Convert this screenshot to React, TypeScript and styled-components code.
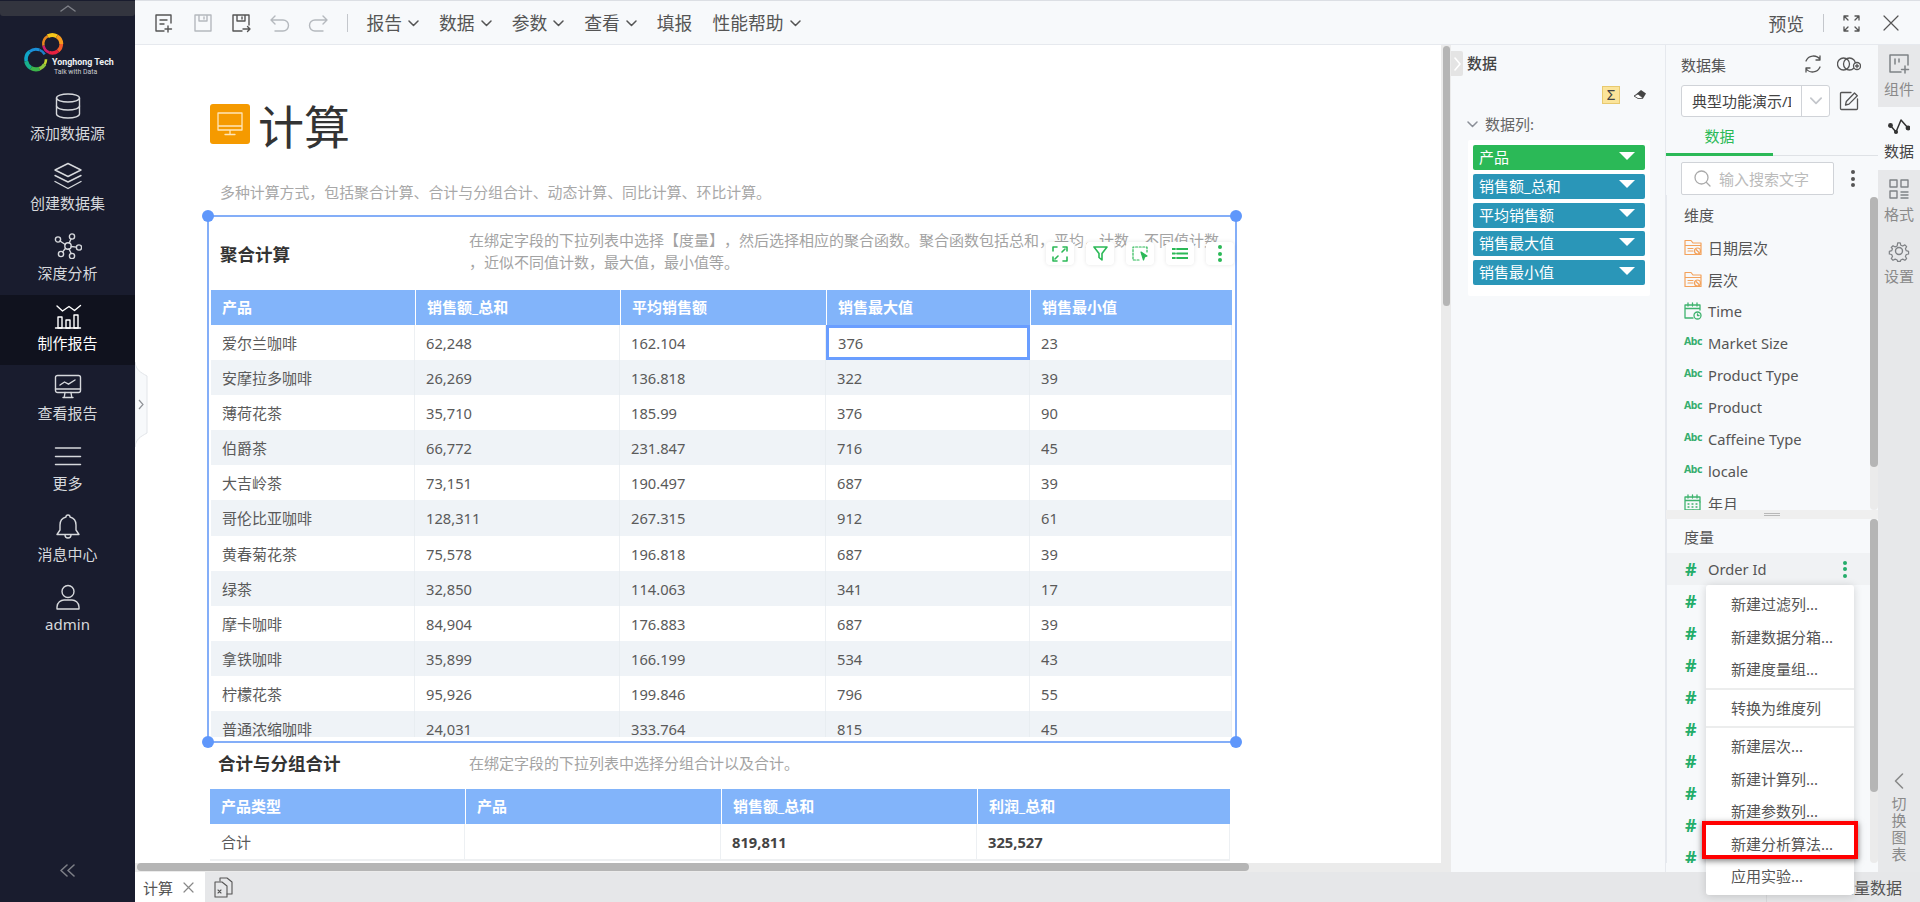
import React from 'react';
import styled, { createGlobalStyle } from 'styled-components';

const Global = createGlobalStyle`
  html, body { margin: 0; padding: 0; height: 100%; overflow: hidden; background: #fff; }
  body { font-family: "Noto Sans", "Noto Sans CJK SC", sans-serif; font-size: 15px; color: #555; text-spacing-trim: space-all; }
  #root { height: 100%; }
  * { box-sizing: border-box; }
`;

const Page = styled.div`position: relative; display: flex; width: 100%; height: 100vh; overflow: hidden;`;

/* ---------- sidebar ---------- */
const Sidebar = styled.aside`display: flex; flex-direction: column; flex: 0 0 135px; background: #191c2e; color: #d6d8dc;`;
const TopStrip = styled.div`display: flex; justify-content: center; align-items: center; height: 15px; margin-top: 1px; background: #33353f; border-radius: 0 0 3px 3px;`;
const LogoBox = styled.div`height: 69px; padding: 16px 0 0 22px;`;
const NavItem = styled.div<{ $active?: boolean }>`
  display: flex; flex-direction: column; align-items: center; height: 70.1px; padding-top: 7px;
  background: ${p => (p.$active ? '#10121e' : 'transparent')};
  color: ${p => (p.$active ? '#fff' : '#d6d8dc')};
  svg { display: block; }
`;
const NavIconBox = styled.div`height: 28px; display: flex; align-items: center; justify-content: center;`;
const NavLabel = styled.div`font-size: 15px; line-height: 20px; margin-top: 3px;`;
const Collapse = styled.div`margin-top: auto; padding-bottom: 25px; display: flex; justify-content: center;`;
const SideTab = styled.div`position: absolute; left: 135px; top: 362px; width: 13px; height: 85px;`;

/* ---------- main ---------- */
const Main = styled.main`flex: 1; display: flex; flex-direction: column; min-width: 0;`;
const Toolbar = styled.header`
  display: flex; align-items: center; height: 45px; padding: 1px 21px 0 19px;
  background: #f7f9fb; border-top: 1px solid #dcdfe4; border-bottom: 1px solid #e6e9ee;
  font-size: 17.8px; color: #555;
`;
const ToolIcon = styled.div`width: 20px; height: 20px; margin-right: 18.5px; display: flex; align-items: center; justify-content: center;`;
const ToolSep = styled.div`width: 1px; height: 18px; background: #c4c7cc; margin: 0 19px 0 0;`;
const ToolMenu = styled.div`display: flex; align-items: center; gap: 6px; margin-right: 20px; line-height: 24px; white-space: nowrap;`;
const ToolRight = styled.div`margin-left: auto; display: flex; align-items: center;`;
const Work = styled.div`flex: 1; display: flex; min-height: 0;`;
const CanvasColumn = styled.div`flex: 0 0 1316px; display: flex; flex-direction: column; min-height: 0;`;
const CanvasRow = styled.div`flex: 1; display: flex; min-height: 0;`;
const CanvasBody = styled.div`flex: 1; overflow: hidden; padding: 59px 0 0 72px; background: #fff;`;
const VTrack = styled.div`flex: 0 0 10px; background: #ebebeb; padding: 1px 1px 0 2px;`;
const VThumb = styled.div`height: 260px; background: #b5b5b5; border-radius: 4px;`;
const HTrack = styled.div`flex: 0 0 9px; background: #ebebeb; padding-left: 2px;`;
const HThumb = styled.div`width: 1112px; height: 8px; background: #b5b5b5; border-radius: 4px;`;

const PageHead = styled.div`display: flex; align-items: center; height: 40px; margin-left: 3px; gap: 8px;`;
const OrangeBadge = styled.div`width: 40px; height: 40px; background: #f59a00; border-radius: 3px; display: flex; align-items: center; justify-content: center;`;
const PageTitle = styled.h1`margin: 3px 0 0; font-size: 46px; line-height: 50px; font-weight: 400; color: #333;`;
const PageSub = styled.p`margin: 0; padding: 37px 0 0 13px; height: 71px; font-size: 14.9px; line-height: 22px; color: #a8a8a8; white-space: nowrap;`;

const SelectBox = styled.section`position: relative; width: 1030px; height: 528px; border: 2px solid #84aef8; padding: 0 0 3px 2px; `;
const Handle = styled.span<{ $x: 'l' | 'r'; $y: 't' | 'b' }>`
  position: absolute; width: 12px; height: 12px; border-radius: 50%; background: #5f97fb;
  ${p => (p.$x === 'l' ? 'left: -7px;' : 'right: -7px;')}
  ${p => (p.$y === 't' ? 'top: -7px;' : 'bottom: -7px;')}
`;
const SectionHead = styled.div<{ $h: number; $left: number }>`display: flex; align-items: center; height: ${p => p.$h}px; margin-left: ${p => p.$left}px;`;
const SectionTitle = styled.h2<{ $w: number; $dy: number }>`flex: 0 0 ${p => p.$w}px; margin: ${p => p.$dy}px 0 0; font-size: 17.5px; line-height: 24px; font-weight: 700; color: #333;`;
const SectionDesc = styled.div<{ $dy: number }>`font-size: 15px; line-height: 22px; color: #a3a3a3; white-space: nowrap; margin-top: ${p => p.$dy}px;`;
const Clip = styled.div`height: 447px; overflow: hidden;`;
const FloatBar = styled.div`position: absolute; right: 1px; top: 25px; display: flex; gap: 12px;`;
const FloatBtn = styled.div`width: 28px; height: 23px; background: #fff; border-radius: 4px; box-shadow: 0 0 4px rgba(0,0,0,.1); display: flex; align-items: center; justify-content: center;`;

const Grid = styled.div<{ $cols: string }>`display: grid; grid-template-columns: ${p => p.$cols};`;
const HeadCell = styled.div<{ $h: number }>`
  height: ${p => p.$h}px; line-height: ${p => p.$h}px; padding-left: 11px; background: #82b4fa; color: #fff;
  font-weight: 700; font-size: 15px; border-left: 1px solid #fff; white-space: nowrap;
  &:first-child { border-left: 0; }
`;
const Cell = styled.div<{ $alt?: boolean; $sel?: boolean; $strong?: boolean; $cjk?: boolean }>`
  height: 35.1px; line-height: 36px; padding-left: ${p => (p.$sel ? '9px' : '11px')};
  background: ${p => (p.$alt ? '#eff3f7' : '#fff')}; color: ${p => (p.$strong ? '#444' : '#5a5a5a')};
  font-weight: ${p => (p.$strong ? 700 : 400)}; white-space: nowrap; font-size: ${p => (p.$cjk ? '15px' : '14.7px')};
  border-right: ${p => (p.$sel ? '0' : '1px solid rgba(230,233,238,.7)')};
  ${p => p.$sel && 'border: 3px solid #6a9eff; line-height: 30px;'}
`;
const SecondBlock = styled.div`margin-left: 3px; width: 1020px;`;
const TotalRow = styled.div`border-bottom: 2px solid #eef0f2; height: 37px; overflow: hidden;`;

/* ---------- data binding panel ---------- */
const DataPanel = styled.div`flex: 0 0 215px; background: #f7f9fb; border-right: 1px solid #e6e9ee; padding-top: 6px;`;
const PanelHeadRow = styled.div`display: flex; align-items: center; gap: 4px; height: 25px;`;
const CollapseTab = styled.div`width: 12px; height: 25px; background: #e4e4e4; display: flex; align-items: center; justify-content: center; border-radius: 0 2px 2px 0;`;
const PanelTitle = styled.span`font-size: 15px; color: #444; font-weight: 500; margin-top: -2px;`;
const ToolRow = styled.div`display: flex; justify-content: flex-end; align-items: center; gap: 13px; margin-top: 10px; padding-right: 18px; height: 18px;`;
const SumBtn = styled.div`width: 18px; height: 18px; background: #fbe49a; border: 1px solid #e8c96f; color: #444; font-size: 15px; line-height: 15px; text-align: center;`;
const GroupHead = styled.div`display: flex; align-items: center; gap: 7px; height: 20px; margin-top: 10px; padding-left: 16px; color: #666; font-size: 15px; line-height: 16px;`;
const PillBox = styled.div`display: flex; flex-direction: column; gap: 3.75px; width: 182px; height: 156px; margin: 6px 0 0 17px; padding: 5px; background: #fff; border-radius: 2px;`;
const Pill = styled.div<{ $green?: boolean }>`
  display: flex; align-items: center; justify-content: space-between; height: 25px; padding: 0 10px 0 6px;
  background: ${p => (p.$green ? '#2bb957' : '#2a96b8')}; color: #fff; border-radius: 2px; font-size: 15px; line-height: 25px;
`;
const Tri = styled.span`width: 0; height: 0; border-left: 8px solid transparent; border-right: 8px solid transparent; border-top: 8px solid #fff; margin-top: -4px;`;

/* ---------- field panel ---------- */
const FieldPanel = styled.div`flex: 0 0 212px; display: flex; flex-direction: column; background: #f7f9fb; min-height: 0;`;
const DsHead = styled.div`display: flex; align-items: center; height: 24px; margin-top: 7px; padding: 0 17px 0 15px; font-size: 15px; color: #555;`;
const DsName = styled.span`margin-right: auto;`;
const DsIcons = styled.div`display: flex; align-items: center; gap: 15px;`;
const SelectRow = styled.div`display: flex; align-items: center; gap: 9px; margin-top: 9px; padding-left: 15px;`;
const SelectField = styled.div`display: flex; width: 149px; height: 32px; background: #fff; border: 1px solid #d0d3d8; border-radius: 3px;`;
const SelectCell = styled.div`width: 120px; padding: 0 10px; border-right: 1px solid #d0d3d8;`;
const SelectText = styled.div`overflow: hidden; white-space: nowrap; line-height: 30px; color: #444; font-size: 15px;`;
const SelectArrow = styled.div`flex: 1; display: flex; align-items: center; justify-content: center;`;
const TabLine = styled.div`height: 39px; border-bottom: 1px solid #dfe2e6;`;
const TabItem = styled.div`width: 107px; height: 39px; border-bottom: 3px solid #2bb957; color: #2bb957; text-align: center; font-size: 15px; line-height: 38px;`;
const SearchRow = styled.div`display: flex; align-items: center; height: 33px; margin-top: 6px; padding-left: 15px;`;
const SearchBox = styled.div`display: flex; align-items: center; gap: 8px; width: 153px; height: 33px; padding-left: 12px; background: #fff; border: 1px solid #d0d3d8; border-radius: 2px; color: #bbb; font-size: 15px; white-space: nowrap;`;
const Dots = styled.div<{ $c?: string; $left?: number }>`
  display: flex; flex-direction: column; gap: 2.5px; align-items: center; margin-left: ${p => p.$left ?? 17}px;
  span { width: 4px; height: 4px; border-radius: 50%; background: ${p => p.$c || '#555'}; }
`;
const Pane = styled.div<{ $h: number; $top?: number }>`display: flex; height: ${p => p.$h}px; padding-top: ${p => p.$top ?? 0}px; border-left: 1px solid #e6e9ee; overflow: hidden;`;
const FieldList = styled.div`flex: 1; overflow: hidden; min-width: 0;`;
const PaneTrack = styled.div`flex: 0 0 8px; background: #ebebeb; border-radius: 4px;`;
const PaneThumb = styled.div<{ $h: number }>`height: ${p => p.$h}px; background: #b5b5b5; border-radius: 4px;`;
const PaneLabel = styled.div<{ $h: number }>`height: ${p => p.$h}px; padding: 2px 0 0 17px; line-height: ${p => p.$h - 2}px; color: #555; font-size: 15px;`;
const FieldRow = styled.div<{ $hover?: boolean; $cjk?: boolean }>`
  display: flex; align-items: center; height: 32.05px; padding-left: 17px; color: #555; font-size: ${p => (p.$cjk ? '15px' : '14.7px')}; white-space: nowrap;
  background: ${p => (p.$hover ? '#f0f2f4' : 'transparent')};
`;
const FieldIcon = styled.span`flex: 0 0 24px; display: flex; align-items: center;`;
const AbcMark = styled.span`font-size: 10.5px; font-weight: 700; color: #36ae6e; letter-spacing: -0.4px; margin-top: -4px;`;
const HashMark = styled.span`font-size: 18px; font-weight: 700; color: #24ad6a; line-height: 18px; margin-left: 1px;`;
const RowDots = styled.div`margin-left: auto; margin-right: 23px;`;
const Splitter = styled.div`height: 9px; background: #efefef; display: flex; flex-direction: column; align-items: center; justify-content: center; gap: 1px; span { width: 16px; height: 1px; background: #b8b8b8; }`;

/* ---------- right strip ---------- */
const Strip = styled.div`flex: 0 0 42px; display: flex; flex-direction: column; background: #e7e8ea;`;
const StripTab = styled.div<{ $active?: boolean; $h: number }>`
  display: flex; flex-direction: column; align-items: center; height: ${p => p.$h}px; padding-top: 8px;
  background: ${p => (p.$active ? '#f7f9fb' : 'transparent')}; color: ${p => (p.$active ? '#444' : '#8a8a8a')};
`;
const StripLabel = styled.span`font-size: 15px; line-height: 20px; margin-top: 4px;`;
const SwitchBox = styled.div`margin-top: auto; margin-bottom: 9px; display: flex; flex-direction: column; align-items: center; color: #8a8a8a; font-size: 15px; line-height: 17px;`;
const SwitchGap = styled.span`height: 5px;`;

/* ---------- bottom ---------- */
const Bottom = styled.footer`display: flex; align-items: center; flex: 0 0 30px; background: #e6e7e9; position: relative;`;
const SheetTab = styled.div`display: flex; align-items: center; justify-content: space-between; width: 70px; height: 30px; padding: 0 11px 0 8px; margin-right: 9px; background: #fff; color: #555; font-size: 15px;`;
const BottomDivider = styled.div`margin-left: auto; width: 1px; height: 30px; background: #d8d9db;`;
const BottomText = styled.div`flex: 0 0 153px; padding-left: 71px; font-size: 16px; color: #555; white-space: nowrap;`;

/* ---------- context menu ---------- */
const Menu = styled.div`position: absolute; left: 1706px; top: 585px; width: 148px; height: 310px; padding-top: 3px; background: #fff; border-radius: 3px; box-shadow: 0 1px 8px rgba(0,0,0,.16);`;
const MenuItem = styled.div<{ $mark?: boolean }>`
  position: relative; height: 32.5px; line-height: 32.5px; padding-left: 25px; font-size: 15px; color: #555; white-space: nowrap;
  ${p => p.$mark && `&::after { content: ''; position: absolute; left: -4px; right: -4px; top: -7px; bottom: 1px; border: 4px solid #f00; box-shadow: 0 2px 6px rgba(0,0,0,.5); }`}
`;
const MenuSep = styled.div`height: 2px; margin: 2px 0 2px; background: #eceded;`;
const Flip = styled.span<{ $flip?: boolean }>`display: flex; transform: ${p => (p.$flip ? 'scaleX(-1)' : 'none')};`;
const RightGap = styled.span<{ $w: number }>`width: ${p => p.$w}px;`;

/* ---------- icons ---------- */
type IP = { c?: string };
const Svg = ({ w, h, c = 'currentColor', sw = 1.4, vb, children }: { w: number; h: number; c?: string; sw?: number; vb?: string; children: React.ReactNode }) => (
  <svg width={w} height={h} viewBox={vb || `0 0 ${w} ${h}`} fill="none" stroke={c} strokeWidth={sw} strokeLinecap="round" strokeLinejoin="round">{children}</svg>
);
const Chevron = ({ c = '#555', s = 11 }: IP & { s?: number }) => (
  <Svg w={s} h={Math.round(s * 0.6)} c={c} sw={1.5} vb="0 0 11 7"><path d="M1 1l4.5 4.5L10 1" /></Svg>
);
const X = ({ s = 14, c = '#555' }: IP & { s?: number }) => (
  <Svg w={s} h={s} c={c} sw={1.2}><path d={`M1 1L${s - 1} ${s - 1}M${s - 1} 1L1 ${s - 1}`} /></Svg>
);
const arc = (cx: number, cy: number, r: number, a0: number, a1: number) => {
  const t = (a: number) => [cx + r * Math.cos((a * Math.PI) / 180), cy + r * Math.sin((a * Math.PI) / 180)].map(v => v.toFixed(2)).join(' ');
  return `M${t(a0)}A${r} ${r} 0 0 1 ${t(a1)}`;
};
const leftRing: [number, number, string, number][] = [
  [-70, -30, '#1c7fc8', 2.6], [-130, -70, '#1a8fd8', 3], [-190, -130, '#10a5c8', 3.6], [-240, -190, '#18b08c', 4],
  [-290, -240, '#3cb54a', 4.2], [-330, -290, '#8cc63f', 3.6], [-360, -330, '#c4d62e', 2.6],
];
const upperRing: [number, number, string, number][] = [
  [-120, -60, '#f5c61a', 4], [-60, 0, '#f79a1e', 4], [0, 50, '#f15a29', 3.6], [50, 110, '#e8213f', 3.4],
  [110, 170, '#d01c6a', 2.6], [170, 240, '#e8861e', 2.6],
];
const Logo = () => (
  <svg width="100" height="45" viewBox="0 0 100 45" fill="none">
    {leftRing.map(([a, b, c, w]) => <path key={a} d={arc(14, 27.3, 10, a, b)} stroke={c} strokeWidth={w} />)}
    {upperRing.map(([a, b, c, w]) => <path key={a} d={arc(30.3, 12, 9, a, b)} stroke={c} strokeWidth={w} />)}
    <text x="30" y="33" fill="#eef0f2" fontSize="8.9" fontWeight="700" fontFamily="Roboto, sans-serif">Yonghong Tech</text>
    <text x="32" y="42" fill="#c9ccd0" fontSize="6.9" fontFamily="Roboto, sans-serif">Talk with Data</text>
  </svg>
);
const navIcons: Record<string, React.ReactNode> = {
  db: <Svg w={26} h={26}><ellipse cx="13" cy="5" rx="11.5" ry="4" /><path d="M1.5 5v16c0 2.2 5 4 11.5 4s11.5-1.8 11.5-4V5" /><path d="M1.5 13c0 2.2 5 4 11.5 4s11.5-1.8 11.5-4" /></Svg>,
  layers: <Svg w={28} h={28}><path d="M14 1.5L27 8l-13 6.5L1 8z" /><path d="M1 13.5l13 6.5 13-6.5" /><path d="M1 19.5l13 7 13-7" /></Svg>,
  graph: <Svg w={28} h={26}><circle cx="14" cy="13" r="3.2" /><circle cx="18" cy="3.5" r="2.6" /><circle cx="4" cy="6.5" r="2.6" /><circle cx="25" cy="14.5" r="2.6" /><circle cx="7" cy="21" r="2.6" /><circle cx="18" cy="23" r="2.6" /><path d="M15.2 10l1.8-4M6 8l5.2 3.5M17.2 13.5l5.2.6M11.6 15.3l-3 3.6M15 16l2.2 4.5" /></Svg>,
  chart: <Svg w={28} h={26}><path d="M3 3l5.5 5 6.5-4.5 5.5 4 6-5" /><path d="M1.5 25h25" /><rect x="4" y="14" width="4" height="11" /><rect x="12" y="17" width="4" height="8" /><rect x="20" y="12" width="4" height="13" /></Svg>,
  monitor: <Svg w={28} h={25}><rect x="1.5" y="1.5" width="25" height="17" rx="2" /><path d="M1.5 15h25M6 11l4.5-3 4 2.2L21 6M9 23.5h10M11 18.5l-.8 5M17 18.5l.8 5" /></Svg>,
  bars: <Svg w={28} h={20} sw={1.5}><path d="M1.5 2h25M1.5 10.5h25M1.5 18.5h25" /></Svg>,
  bell: <Svg w={26} h={27}><path d="M13 2a2 2 0 0 1 2 2c4 1 6 4.500 6 8v5l3 4.500H2L5 17v-5c0-3.500 2-7 6-8a2 2 0 0 1 2-2z" /><path d="M10 22a3 3 0 0 0 6 0" /></Svg>,
  user: <Svg w={26} h={26}><circle cx="13" cy="7.500" r="6" /><path d="M2 25v-2c0-4.500 4-7 7-7h8c3 0 7 2.500 7 7v2z" /></Svg>,
};
const NewDoc = () => <Svg w={20} h={20} c="#555"><path d="M17 10V2H2v16h8M6 7h7M6 11h4M14 13v6M11 16h6.500" /></Svg>;
const SaveIcon = ({ c }: { c: string }) => <Svg w={20} h={20} c={c}><path d="M2 2h16v16H2zM6 2v6h8V2M11 4v2" /></Svg>;
const SaveAs = () => <Svg w={20} h={20} c="#555"><path d="M11 18H2V2h16v10M6 2v6h8V2M11 4v2M12 16h7M16.500 13.500L19 16l-2.500 2.500" /></Svg>;
const Undo = ({ flip }: { flip?: boolean }) => <Flip $flip={flip}><Svg w={20} h={18} c="#b5b9be"><path d="M5 2L1 6l4 4M1 6h12a5.500 5.500 0 0 1 0 11H5" /></Svg></Flip>;

const rows = [
  ['爱尔兰咖啡', '62,248', '162.104', '376', '23'], ['安摩拉多咖啡', '26,269', '136.818', '322', '39'],
  ['薄荷花茶', '35,710', '185.99', '376', '90'], ['伯爵茶', '66,772', '231.847', '716', '45'],
  ['大吉岭茶', '73,151', '190.497', '687', '39'], ['哥伦比亚咖啡', '128,311', '267.315', '912', '61'],
  ['黄春菊花茶', '75,578', '196.818', '687', '39'], ['绿茶', '32,850', '114.063', '341', '17'],
  ['摩卡咖啡', '84,904', '176.883', '687', '39'], ['拿铁咖啡', '35,899', '166.199', '534', '43'],
  ['柠檬花茶', '95,926', '199.846', '796', '55'], ['普通浓缩咖啡', '24,031', '333.764', '815', '45'],
];
const nav = [['db', '添加数据源'], ['layers', '创建数据集'], ['graph', '深度分析'], ['chart', '制作报告'], ['monitor', '查看报告'], ['bars', '更多'], ['bell', '消息中心'], ['user', 'admin']];
const Folder = () => <Svg w={18} h={17} c="#f3a25c" sw={1.2}><path d="M1 15.500V1.500h6l2 2.500h8v11.500zM1 6.500h16M4 9.500h5M4 12h5" /><circle cx="13.500" cy="12" r="3" fill="#f7f9fb" /><path d="M12 10.500l3 3" /></Svg>;
const Calendar = ({ clock }: { clock?: boolean }) => (
  <Svg w={18} h={18} c="#3fb36f" sw={1.3}>
    <path d="M1 3h15v5M1 3v13h8M1 6.500h15M4 1v3M8.500 1v3M13 1v3" />
    {clock ? <><circle cx="13.500" cy="13.500" r="3.500" /><path d="M13.500 12v1.500h1.500" /></> : <path d="M16 8v8H9M4 10h1M8 10h1M12 10h1M4 13h1M8 13h1M12 13h1" />}
  </Svg>
);
const dims: [React.ReactNode, string, boolean][] = [
  [<Folder />, '日期层次', true], [<Folder />, '层次', true], [<Calendar clock />, 'Time', false],
  [<AbcMark>Abc</AbcMark>, 'Market Size', false], [<AbcMark>Abc</AbcMark>, 'Product Type', false], [<AbcMark>Abc</AbcMark>, 'Product', false],
  [<AbcMark>Abc</AbcMark>, 'Caffeine Type', false], [<AbcMark>Abc</AbcMark>, 'locale', false], [<Calendar />, '年月', true],
];
const G = '#2bb957';
const floats = [
  <Svg w={16} h={16} c={G} sw={1.6}><path d="M1 5V1h4M11 1h4v4M1 11v4h4M15 11v4h-4M6 10l-3 3M10 6l3-3" /></Svg>,
  <Svg w={15} h={15} c={G} sw={1.6}><path d="M1 1h13L9 7.500V14L6 11.500V7.500z" /></Svg>,
  <Svg w={16} h={15} c={G} sw={1.2}><path d="M7 14H1V1h14v6" strokeDasharray="2 1.600" /><path d="M9 6l6 4-2.500 1-1 3z" fill={G} /></Svg>,
  <Svg w={16} h={13} c={G} sw={1.8}><path d="M0 2h3M5 2h11M0 6.500h3M5 6.500h11M0 11h3M5 11h11" /></Svg>,
  <Dots $c={G} $left={0}><span /><span /><span /></Dots>,
];

export default function App() {
  return (
    <Page>
      <Global />
      <Sidebar>
        <TopStrip><Svg w={16} h={7} c="#7d7f87" sw={1.5}><path d="M1 6l7-5 7 5" /></Svg></TopStrip>
        <LogoBox><Logo /></LogoBox>
        {nav.map(([k, l]) => (
          <NavItem key={l} $active={l === '制作报告'}>
            <NavIconBox>{navIcons[k]}</NavIconBox>
            <NavLabel>{l}</NavLabel>
          </NavItem>
        ))}
        <Collapse><Svg w={15} h={13} c="#7d7f87" sw={1.6}><path d="M7 1L1 6.500 7 12M14 1L8 6.500 14 12" /></Svg></Collapse>
      </Sidebar>
      <SideTab>
        <svg width="13" height="85" viewBox="0 0 13 85" fill="#f7f9fb" stroke="#e2e5e9">
          <path d="M0 0c1 8 5 10 12 14v57c-7 4-11 6-12 14z" />
          <path d="M4 38l4 4.500-4 4.500" stroke="#8f9297" fill="none" strokeWidth="1.2" />
        </svg>
      </SideTab>
      <Main>
        <Toolbar>
          <ToolIcon><NewDoc /></ToolIcon>
          <ToolIcon><SaveIcon c="#b5b9be" /></ToolIcon>
          <ToolIcon><SaveAs /></ToolIcon>
          <ToolIcon><Undo /></ToolIcon>
          <ToolIcon><Undo flip /></ToolIcon>
          <ToolSep />
          {['报告', '数据', '参数', '查看'].map(t => <ToolMenu key={t}>{t}<Chevron /></ToolMenu>)}
          <ToolMenu>填报</ToolMenu>
          <ToolMenu>性能帮助<Chevron /></ToolMenu>
          <ToolRight>
            <span>预览</span>
            <RightGap $w={19} />
            <ToolSep />
            <Svg w={17} h={17} c="#555" sw={1.3}><path d="M1 5V1h4M12 1h4v4M1 12v4h4M16 12v4h-4M1 1l4 4M16 1l-4 4M1 16l4-4M16 16l-4-4" /></Svg>
            <RightGap $w={23} />
            <X s={16} />
          </ToolRight>
        </Toolbar>
        <Work>
          <CanvasColumn>
            <CanvasRow>
              <CanvasBody>
                <PageHead>
                  <OrangeBadge><Svg w={26} h={24} c="#ffe6b8" sw={1.3}><path d="M1 1h24v17H1zM1 14h24M13 18v4M8 22.500h10" /></Svg></OrangeBadge>
                  <PageTitle>计算</PageTitle>
                </PageHead>
                <PageSub>多种计算方式，包括聚合计算、合计与分组合计、动态计算、同比计算、环比计算。</PageSub>
                <SelectBox>
                  <Handle $x="l" $y="t" /><Handle $x="r" $y="t" /><Handle $x="l" $y="b" /><Handle $x="r" $y="b" />
                  <SectionHead $h={73} $left={9}>
                    <SectionTitle $w={249} $dy={0}>聚合计算</SectionTitle>
                    <SectionDesc $dy={-5}>在绑定字段的下拉列表中选择【度量】，然后选择相应的聚合函数。聚合函数包括总和，平均，计数，不同值计数<br />，近似不同值计数，最大值，最小值等。</SectionDesc>
                  </SectionHead>
                  <FloatBar>{floats.map((f, i) => <FloatBtn key={i}>{f}</FloatBtn>)}</FloatBar>
                  <Clip>
                    <Grid $cols="204px 205px 206px 204px 202px">
                      {['产品', '销售额_总和', '平均销售额', '销售最大值', '销售最小值'].map(h => <HeadCell key={h} $h={35}>{h}</HeadCell>)}
                      {rows.map((r, i) => r.map((v, j) => <Cell key={`${i}-${j}`} $cjk={j === 0} $alt={i % 2 === 1} $sel={i === 0 && j === 3}>{v}</Cell>))}
                    </Grid>
                  </Clip>
                </SelectBox>
                <SecondBlock>
                  <SectionHead $h={46} $left={8}>
                    <SectionTitle $w={251} $dy={-7}>合计与分组合计</SectionTitle>
                    <SectionDesc $dy={-7}>在绑定字段的下拉列表中选择分组合计以及合计。</SectionDesc>
                  </SectionHead>
                  <Grid $cols="255px 256px 256px 253px">
                    {['产品类型', '产品', '销售额_总和', '利润_总和'].map(h => <HeadCell key={h} $h={35}>{h}</HeadCell>)}
                  </Grid>
                  <TotalRow>
                    <Grid $cols="255px 256px 256px 253px">
                      {['合计', '', '819,811', '325,527'].map((v, i) => <Cell key={i} $cjk={i === 0} $strong={i > 0}>{v}</Cell>)}
                    </Grid>
                  </TotalRow>
                </SecondBlock>
              </CanvasBody>
              <VTrack><VThumb /></VTrack>
            </CanvasRow>
            <HTrack><HThumb /></HTrack>
          </CanvasColumn>

          <DataPanel>
            <PanelHeadRow>
              <CollapseTab><Svg w={7} h={14} c="#fff" sw={1.6}><path d="M1 1l5 6-5 6" /></Svg></CollapseTab>
              <PanelTitle>数据</PanelTitle>
            </PanelHeadRow>
            <ToolRow>
              <SumBtn>Σ</SumBtn>
              <svg width="14" height="13" viewBox="0 0 14 13"><path d="M8 1l5 3.500-3 5H5L1 7z" fill="#444" /><path d="M1 7l4 2.500h3L10 9 5 5z" fill="#fff" stroke="#444" strokeWidth=".8" /></svg>
            </ToolRow>
            <GroupHead><Chevron c="#8b9098" />数据列:</GroupHead>
            <PillBox>
              {['产品', '销售额_总和', '平均销售额', '销售最大值', '销售最小值'].map((t, i) => <Pill key={t} $green={i === 0}>{t}<Tri /></Pill>)}
            </PillBox>
          </DataPanel>

          <FieldPanel>
            <DsHead>
              <DsName>数据集</DsName>
              <DsIcons>
                <Svg w={18} h={18} c="#555" sw={1.3}><path d="M2 6a8 8 0 0 1 14-1.500M16 12a8 8 0 0 1-14 1.500M16 1v4h-4M2 17v-4h4" /></Svg>
                <Svg w={24} h={16} c="#555" sw={1.3}><circle cx="6.500" cy="8" r="6" /><circle cx="12.500" cy="8" r="6" /><circle cx="20" cy="10" r="3.500" fill="#f7f9fb" /><path d="M20 8.500v3M18.500 10h3" /></Svg>
              </DsIcons>
            </DsHead>
            <SelectRow>
              <SelectField>
                <SelectCell><SelectText>典型功能演示/Integration</SelectText></SelectCell>
                <SelectArrow><Chevron c="#c3c6cb" s={14} /></SelectArrow>
              </SelectField>
              <Svg w={20} h={20} c="#555" sw={1.3}><path d="M12 1.500H2.500a1 1 0 0 0-1 1v15a1 1 0 0 0 1 1h15a1 1 0 0 0 1-1V8" /><path d="M6.500 14l.8-3.500L15.500 2l2.800 2.800-8.300 8.300z" /></Svg>
            </SelectRow>
            <TabLine><TabItem>数据</TabItem></TabLine>
            <SearchRow>
              <SearchBox>
                <Svg w={17} h={17} c="#aaa" sw={1.3}><circle cx="7.500" cy="7.500" r="6.500" /><path d="M12.500 12.500l3.500 3.500" /></Svg>
                输入搜索文字
              </SearchBox>
              <Dots><span /><span /><span /></Dots>
            </SearchRow>
            <Pane $h={315} $top={2}>
              <FieldList>
                <PaneLabel $h={34}>维度</PaneLabel>
                {dims.map(([ic, t, cjk]) => <FieldRow key={t} $cjk={cjk}><FieldIcon>{ic}</FieldIcon>{t}</FieldRow>)}
              </FieldList>
              <PaneTrack><PaneThumb $h={270} /></PaneTrack>
            </Pane>
            <Splitter><span /><span /></Splitter>
            <Pane $h={344}>
              <FieldList>
                <PaneLabel $h={34}>度量</PaneLabel>
                <FieldRow $hover><FieldIcon><HashMark>#</HashMark></FieldIcon>Order Id<RowDots><Dots $c="#24ad6a" $left={0}><span /><span /><span /></Dots></RowDots></FieldRow>
                {Array.from({ length: 9 }).map((_, i) => <FieldRow key={i}><FieldIcon><HashMark>#</HashMark></FieldIcon></FieldRow>)}
              </FieldList>
              <PaneTrack><PaneThumb $h={273} /></PaneTrack>
            </Pane>
          </FieldPanel>

          <Strip>
            <StripTab $h={62}>
              <Svg w={22} h={22} c="#7f8286" sw={1.5}><path d="M13 19H2V2h18v10M7 6v5M11 6v3M17 13v7M13.500 16.500h7" /></Svg>
              <StripLabel>组件</StripLabel>
            </StripTab>
            <StripTab $h={63} $active>
              <Svg w={22} h={22} c="#333" sw={1.5}><path d="M2 10l6 7 5-12 7 8" /><circle cx="2.500" cy="10.500" r="1.700" fill="#333" /><circle cx="8" cy="17" r="1.300" fill="#333" /><circle cx="20" cy="13" r="1.700" fill="#333" /></Svg>
              <StripLabel>数据</StripLabel>
            </StripTab>
            <StripTab $h={62}>
              <Svg w={22} h={22} c="#7f8286" sw={1.4}><rect x="2" y="2" width="7" height="7" /><rect x="13" y="2" width="7" height="7" /><rect x="2" y="13" width="7" height="7" /><path d="M13 14h7M13 17h7M13 20h7" /></Svg>
              <StripLabel>格式</StripLabel>
            </StripTab>
            <StripTab $h={62}>
              <Svg w={22} h={22} c="#7f8286" sw={1.4}><circle cx="11" cy="11" r="3.500" /><path d="M9.500 1.500h3l.6 2.800 2.300 1 2.500-1.400 2 2.100-1.400 2.500 1 2.200 2.700.8v3l-2.700.6-1 2.300 1.400 2.400-2 2.100-2.500-1.400-2.300 1-.6 1.700h-3l-.6-1.700-2.300-1-2.500 1.400-2-2.100 1.400-2.400-1-2.300-2.700-.6v-3l2.700-.8 1-2.200L2.100 7l2-2.100 2.500 1.400 2.300-1z" transform="translate(1.500 1.500) scale(.86)" /></Svg>
              <StripLabel>设置</StripLabel>
            </StripTab>
            <SwitchBox>
              <Svg w={10} h={18} c="#8a8a8a" sw={1.6}><path d="M8.500 2L1.500 9l7 7" /></Svg>
              <SwitchGap />
              <span>切</span><span>换</span><span>图</span><span>表</span>
            </SwitchBox>
          </Strip>
        </Work>
        <Bottom>
          <SheetTab>计算<X s={11} c="#888" /></SheetTab>
          <Svg w={19} h={21} c="#555" sw={1.1}><path d="M6 4V1h7l5 4v12h-5" /><path d="M1 5h7l5 4v11H1z" /><path d="M4 13l3 3M7 13l-3 3" /></Svg>
          <BottomDivider />
          <BottomText>全量数据</BottomText>
        </Bottom>
      </Main>
      <Menu>
        {['新建过滤列...', '新建数据分箱...', '新建度量组...'].map(t => <MenuItem key={t}>{t}</MenuItem>)}
        <MenuSep />
        <MenuItem>转换为维度列</MenuItem>
        <MenuSep />
        <MenuItem>新建层次...</MenuItem>
        <MenuItem>新建计算列...</MenuItem>
        <MenuItem>新建参数列...</MenuItem>
        <MenuItem $mark>新建分析算法...</MenuItem>
        <MenuItem>应用实验...</MenuItem>
      </Menu>
    </Page>
  );
}
